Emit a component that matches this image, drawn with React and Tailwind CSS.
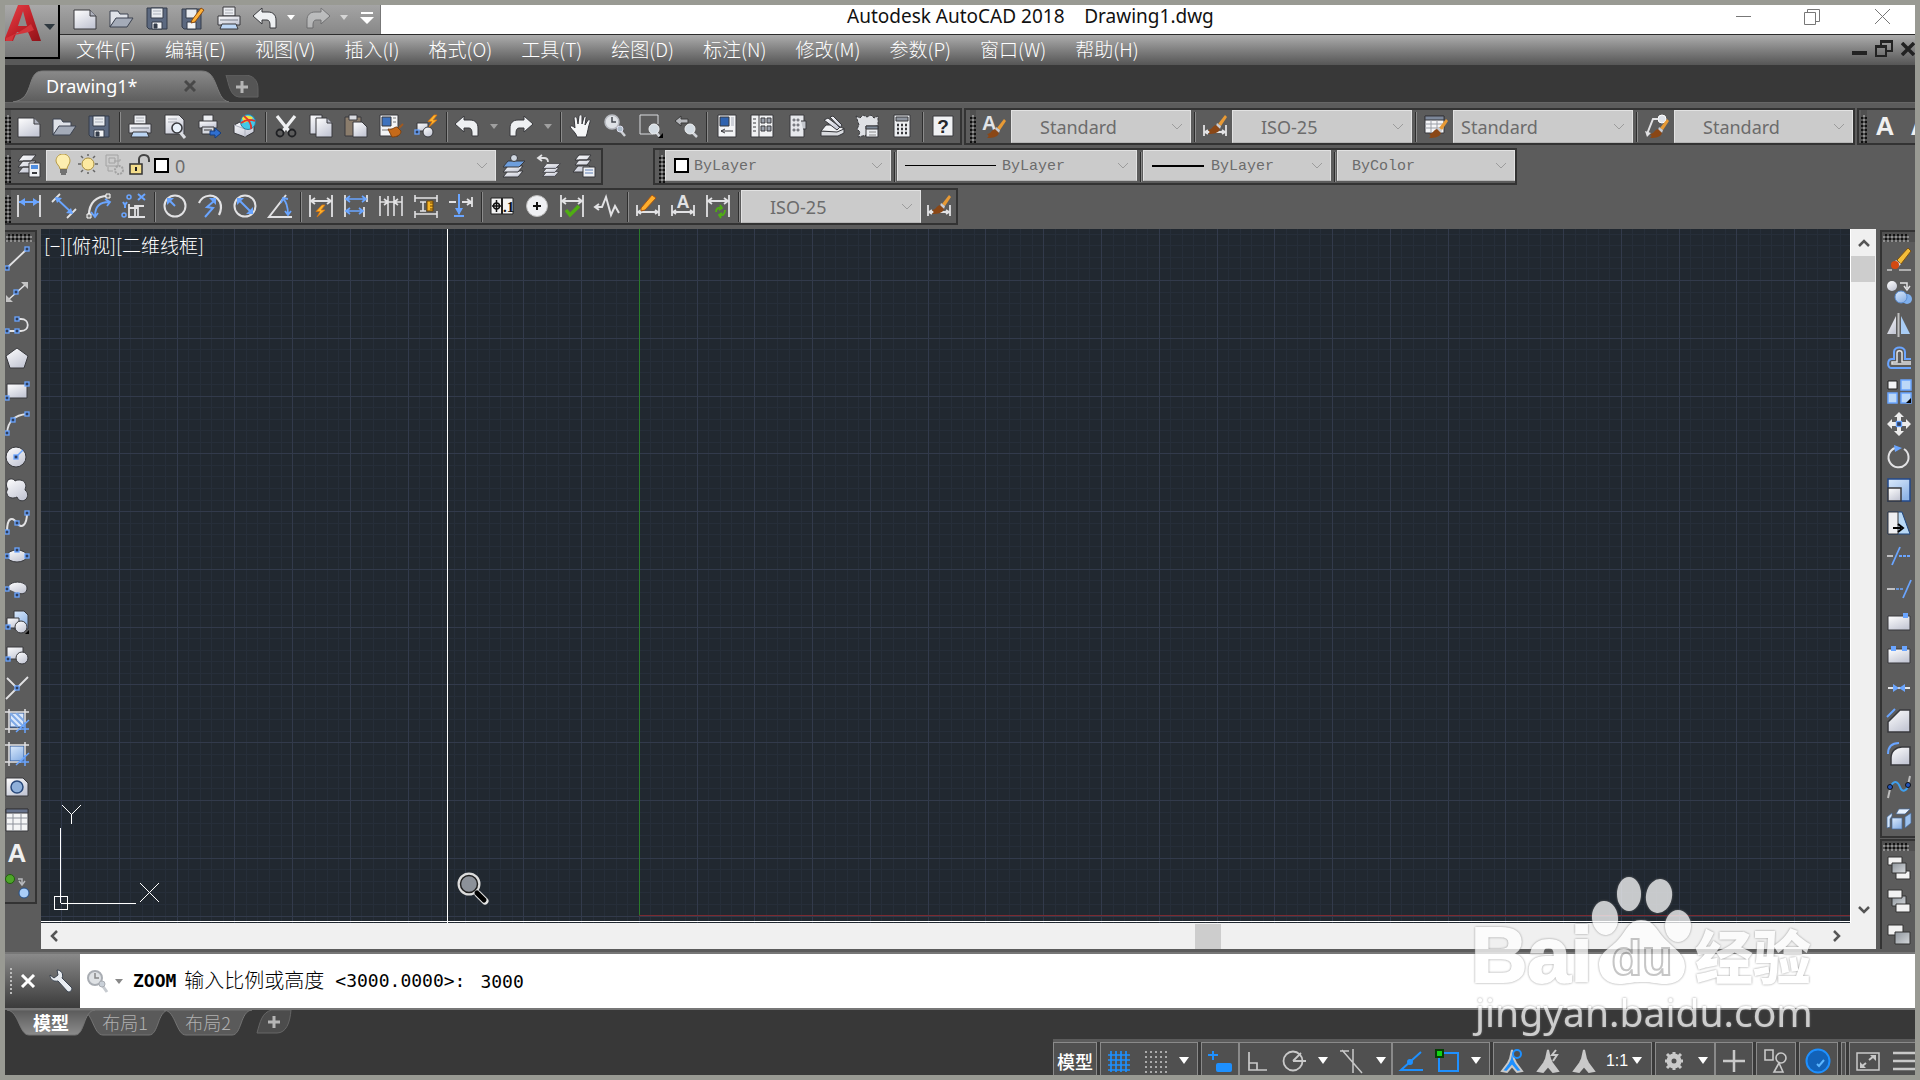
import React from "react";

const W = "#e2e2e4";
const B = "#6aa5ff";
const D = "#38393d";

const Defs = () => (
  <svg className="h-0 w-0 overflow-hidden fixed" aria-hidden="true">
    <defs>
      <linearGradient id="gl" x1="0" y1="0" x2="0.6" y2="1"><stop offset="0" stopColor="#ffffff" /><stop offset="1" stopColor="#c6c9d6" /></linearGradient>
      <linearGradient id="gb" x1="0" y1="0" x2="0.6" y2="1"><stop offset="0" stopColor="#dbeafc" /><stop offset="1" stopColor="#8fb4e6" /></linearGradient>
      <linearGradient id="gg" x1="0" y1="0" x2="1" y2="1"><stop offset="0" stopColor="#8e959c" /><stop offset="1" stopColor="#d5d8db" /></linearGradient>
      <linearGradient id="tab" x1="0" y1="0" x2="0" y2="1"><stop offset="0" stopColor="#8a8a8a" /><stop offset="1" stopColor="#5c5c5c" /></linearGradient>
      <linearGradient id="tabLow" x1="0" y1="0" x2="0" y2="1"><stop offset="0" stopColor="#5a5a5a" /><stop offset="1" stopColor="#8c8c8c" /></linearGradient>
      <linearGradient id="red" x1="0" y1="0" x2="1" y2="1"><stop offset="0" stopColor="#e8444a" /><stop offset="0.5" stopColor="#c3232b" /><stop offset="1" stopColor="#8e1219" /></linearGradient>
    </defs>
  </svg>
);

const Sq = ({ x, y, s = 4 }) => <rect x={x - s / 2} y={y - s / 2} width={s} height={s} fill="#2f3f5e" stroke={B} strokeWidth="1.3" />;
const Brush = () => (
  <g stroke="none">
    <path d="M22 5 L24 7 L18 16 L15 14z" fill="#e89a35" />
    <path d="M14 13l4 3-1 3-4-3z" fill="#c9ccd2" />
    <path d="M5 20c4 0 4-4 8-5l4 4c-1 4-6 5-12 5 2-1 2-3 0-4z" fill="#8a4716" />
  </g>
);
const Bars = ({ y = 16 }) => <path d={`M1 ${y - 4}v11M23 ${y - 4}v11M2 ${y + 3}h20M5 ${y + 1}l-3 2 3 2M19 ${y + 1}l3 2-3 2`} stroke={W} strokeWidth="1.8" />;
const Dim = ({ y = 7 }) => <path d={`M1 1v22M23 1v22M2 ${y}h20M6 ${y - 3}l-4 3 4 3M18 ${y - 3}l4 3-4 3`} stroke={W} strokeWidth="1.8" />;
const Bolt = ({ x = 0, y = 0 }) => <path transform={`translate(${x} ${y})`} d="M6 0L0 6.500h4L1 12l8-7H5l4-5z" fill="#ffb52e" stroke="#d9730c" strokeWidth="0.8" />;
const Stack = ({ blue }) => (
  <g stroke={D} strokeWidth="1">
    <path d="M6 17h15l-5 6H1z" fill="url(#gl)" />
    <path d="M6 12h15l-5 6H1z" fill="url(#gl)" />
    <path d="M6 7h17l-6 6H1z" fill={blue ? "#6d9edd" : "url(#gl)"} />
  </g>
);

const icons = {
  blank: <g fill="url(#gl)" stroke={D}><path d="M1 4h16l6 6v13H1z" /><path d="M17 4v6h6" fill="#aeb1bd" /></g>,
  open: <g stroke="#3c4350"><path d="M1 5h8l2 3h8v5H7l-6 8z" fill="#dfe2e8" /><path d="M7 12h17l-6 9H1z" fill="#a4abb8" /></g>,
  save: <g stroke="#343c4a"><path d="M2 2h20v21H4l-2-2z" fill="#5c6980" /><path d="M6 2h12v10H6z" fill="#e9ecf0" /><path d="M8 5h8M8 8h8" stroke="#a9afba" /><path d="M7 16h10v7H7z" fill="#f2f3f5" /><path d="M9 18h3v4H9z" fill="#343c4a" /></g>,
  saveas: <g stroke="#343c4a"><path d="M1 3h19v20H3l-2-2z" fill="#5c6980" /><path d="M5 3h11v9H5z" fill="#e9ecf0" /><path d="M6 16h9v7H6z" fill="#f2f3f5" /><path d="M11 14L20 2l3 2-9 12-4 1z" fill="#ffb238" stroke="#8b4c12" /></g>,
  print: <g stroke={D}><path d="M6 1h12v9H6z" fill="#eceef2" /><path d="M8 4h8M8 7h8" stroke="#a8abb2" /><path d="M1 10h22v9H1z" fill="url(#gl)" /><path d="M3 14h18" stroke="#777c87" /><path d="M5 18h14l2 5H3z" fill="#bcd6f5" /></g>,
  preview: <g stroke={D}><path d="M2 1h14l5 5v14H2z" fill="url(#gl)" /><path d="M5 5h9M5 8h9" stroke="#a9acb5" /><path d="M17 18l5 6" strokeWidth="3" stroke="#dcdee3" /><circle cx="14" cy="14" r="5" fill="#e9f1fa" strokeWidth="1.6" /></g>,
  plot: <g stroke={D}><path d="M5 1h10v7H5z" fill="#eceef2" /><path d="M1 7h18v7H1z" fill="url(#gl)" /><path d="M4 13h12v7H4z" fill="#d6d9df" /><path d="M6 16h8" /><path d="M12 17h5v-3l6 5-6 5v-3h-5z" fill="#2f6fd0" stroke="#173d7c" /></g>,
  globe: <g stroke={D}><path d="M1 11l8-4 12 5v6l-9 5-11-4z" fill="url(#gl)" /><path d="M12 23v-8L1 11" stroke="#aeb1bd" /><circle cx="15" cy="8" r="7.500" fill="#45c8e8" stroke="#2d7c9f" /><path d="M9 4c3-3 8-3 11 0l-4 3-5 2z" fill="#f1e040" stroke="none" /><path d="M11 2c5 4 8 8 7 13M8 9c4-3 9-4 14-2" stroke="#e0362c" strokeWidth="1.8" /></g>,
  cut: <g><path d="M3 2l12 15M21 2L9 17" stroke="#f0f1f3" strokeWidth="3.200" /><circle cx="6" cy="19" r="3.500" stroke="#1f2023" strokeWidth="1.800" /><circle cx="18" cy="19" r="3.500" stroke="#1f2023" strokeWidth="1.800" /></g>,
  copy: <g fill="url(#gl)" stroke={D}><path d="M1 1h12v19H1z" /><path d="M7 4h11l5 5v14H7z" /><path d="M18 4v5h5" fill="#b7bac6" /></g>,
  paste: <g stroke={D}><path d="M1 3h16v19H1z" fill="#8b7d6c" /><path d="M5 1h8v5H5z" fill="#d9dbe0" /><path d="M9 8h9l5 5v10H9z" fill="url(#gl)" /></g>,
  match: <g stroke={D}><path d="M1 1h18v21H1z" fill="#f3f4f6" /><path d="M3 3h9v9H3z" fill="#3e72bd" /><path d="M14 4h3M14 8h3M3 16h7" stroke="#777" /><path d="M9 15c5 1 6-2 9-2l4 4c0 4-4 6-9 6z" fill="#c56a1a" stroke="#7f420f" /><path d="M20 14l4-4" stroke="#a05a20" strokeWidth="2" /></g>,
  blockedit: <g><path d="M3 9h11v8H3z" fill="url(#gl)" stroke={D} /><circle cx="14" cy="18" r="5" fill="url(#gl)" stroke={D} /><Sq x={3} y={18} /><Bolt x={14} y={1} /></g>,
  undo: <path d="M0 10L9 2v4h6c5 0 8 3 8 8v8h-6v-3c0-3-1-5-3-5H9v4z" fill="#eef0f2" stroke={D} />,
  redo: <path d="M24 10L15 2v4H9c-5 0-8 3-8 8v8h6v-3c0-3 1-5 3-5h5v4z" fill="#eef0f2" stroke={D} />,
  hand: <path d="M8 23c-1-4-4-6-7-10 1-2 3-1 5 1L5 4c1-2 2-1 3 0l1 6 1-8c1-2 3-1 3 0v8l2-7c1-1 3-1 2 1l-1 7 3-5c1-1 3 0 2 2-2 5-2 10-4 15z" fill="#f5f6f7" stroke={D} />,
  zoomrt: <g><circle cx="8" cy="8" r="7" fill="#dfe2e6" stroke="#b7bac0" strokeWidth="1.500" /><path d="M8 3v5h4" stroke="#44484f" strokeWidth="1.500" /><path d="M16 16l5 6" stroke="#cfd2d7" strokeWidth="2.500" /><circle cx="16" cy="15" r="3" fill="#aebdca" stroke="#dde" /></g>,
  zoomwin: <g><path d="M14 20H1V1h18v9" stroke="#d9dbde" /><path d="M17 18l4 5" stroke="#cfd2d7" strokeWidth="2.500" /><circle cx="15" cy="15" r="5" fill="#d3dbe2" stroke="#f0f2f4" /><path d="M24 19v5h-5z" fill="#000" /></g>,
  zoomprev: <g><path d="M1 7l6-5v3h7v4H7v3z" fill="#b6b8bc" stroke="#3a3a3a" /><path d="M18 18l5 5" stroke="#cfd2d7" strokeWidth="2.500" /><circle cx="16" cy="15" r="5" fill="#d3dbe2" stroke="#f0f2f4" /></g>,
  props: <g stroke={D}><path d="M3 1h18v22H3z" fill="#f3f4f6" /><path d="M5 3h9v9H5z" fill="#2f62ae" /><path d="M16 3h3v9h-3z" fill="#cdd0d7" stroke="none" /><path d="M6 17h12M6 17l4-2M6 17l4 2" /></g>,
  design: <g stroke={D}><path d="M1 1h22v22H1z" fill="#f0f1f3" /><path d="M9 1v22" /><path d="M3 5h3M3 9h3M3 13h3M3 17h3" /><path d="M11 4h4v5h-4zM17 4h4v5h-4zM11 12h4v5h-4zM17 12h4v5h-4z" fill="#9aa0ab" /></g>,
  palettes: <g stroke={D}><path d="M5 1h14v22H5z" fill="#e6e8ec" /><path d="M8 5h2v2H8zM12 5h2v2h-2zM8 10h2v2H8zM12 10h2v2h-2zM8 15h2v2H8zM12 15h2v2h-2z" fill="#a9aeb8" strokeWidth="0.500" /><path d="M16 7h5v8h-3" fill="#c4c7cd" /></g>,
  sheet: <g stroke={D}><path d="M1 17h16l7-3v5l-6 3H1z" fill="#d8dade" /><path d="M1 17L6 11l12 0 6 4-7 3z" fill="#f1f2f4" /><path d="M4 6l4-2 12 9-3 3zM10 3l3-1 9 9-2 3z" fill="url(#gl)" /></g>,
  markup: <g stroke={D}><path d="M1 2l4 2 3-3 4 2 4-2 3 3 4-2v10l-8 1-3 8-9 2 2-5-3-3 2-4z" fill="#dfe1e5" strokeDasharray="3 1" /><path d="M11 12h12v11H11z" fill="#eceef1" /><path d="M11 12h12v3H11z" fill="#7d8896" /><path d="M14 18h7M14 21h7" stroke="#888" /></g>,
  calc: <g stroke={D}><path d="M4 1h16v22H4z" fill="#eceef1" /><path d="M6 3h12v4H6z" fill="#8e949e" /><path d="M7 11h2M11 11h2M15 11h2M7 15h2M11 15h2M15 15h2M7 19h2M11 19h2M15 19h2" strokeWidth="2.500" /></g>,
  help: <g><path d="M2 2h20v20H2z" fill="#f0f1f3" stroke={D} /><text x="12" y="19" textAnchor="middle" fontFamily="Liberation Sans" fontWeight="bold" fontSize="19" fill="#24262a">?</text></g>,
  textstyle: <g><text x="0" y="16" fontFamily="Liberation Sans" fontWeight="bold" fontSize="20" fill="#e2e4e8">A</text><Brush /></g>,
  dimstyle: <g><Bars y={15} /><g transform="translate(0 -4)"><Brush /></g></g>,
  tablestyle: <g><path d="M1 2h19v17H1z" fill="#f5f6f8" stroke={D} /><path d="M1 2h19v4H1z" fill="#7c879a" stroke={D} /><path d="M1 10h19M1 14h19M7 6v13M13 6v13" stroke="#9a9ea6" /><Brush /></g>,
  leaderstyle: <g><circle cx="17" cy="5" r="4" fill="#dfe3ea" stroke="#fff" /><path d="M13 5H8L2 20" stroke={W} strokeWidth="2" /><path d="M0 17l2 6 4-4z" fill={W} /><Brush /></g>,
  bigA: <text x="12" y="21" textAnchor="middle" fontFamily="Liberation Sans" fontWeight="bold" fontSize="26" fill="#f0f0f0">A</text>,
  layers: <g><path d="M6 1h13l-5 6H1zM6 7h13l-5 6H1zM6 13h13l-5 6H1z" fill="url(#gl)" stroke={D} /><path d="M12 9h11v14H12z" fill="#eceef2" stroke={D} /><path d="M14 11h7v4h-7z" fill="#4f8ee0" /><path d="M15 19h5" stroke={D} strokeWidth="2" /></g>,
  layercur: <g><Stack blue /><circle cx="12" cy="4" r="3.500" fill="#cfd6e0" stroke={D} /></g>,
  layerprev: <g><g transform="translate(5 4) scale(.8)"><Stack /></g><path d="M1 4h6c3 0 4 2 4 4M5 1L1 4l4 3" stroke={W} strokeWidth="1.800" /></g>,
  layerstate: <g><path d="M7 1h12l-4 5H3zM7 6h12l-4 5H3zM6 12h12l-4 6H1z" fill="url(#gl)" stroke={D} /><path d="M11 13h12v10H11z" fill="#eef0f3" stroke={D} /><path d="M13 16h8M13 19h8" stroke="#5e7fb5" /></g>,
  linear: <g><path d="M1 1v22M23 1v22" stroke={W} strokeWidth="1.800" /><path d="M2 8h20" stroke={B} strokeWidth="2" /><path d="M8 4v8L2 8zM16 4v8l6-4z" fill={B} /></g>,
  aligned: <g><path d="M0 8l8-8M15 24l9-9" stroke={W} strokeWidth="1.800" /><path d="M4 4l16 15" stroke={B} strokeWidth="1.800" /><path d="M3 3l7 1-5 5zM21 20l-7-1 5-5z" fill={B} /></g>,
  arclen: <g><path d="M2 21C2 9 9 2 21 2" stroke={W} strokeWidth="2.200" /><path d="M8 22C8 13 13 8 22 8M4 18l4 5 3-4M18 5l5 3-3 4" stroke={B} strokeWidth="1.800" /><path d="M0 20h4v4H0zM19 0h4v4h-4z" fill="#777" stroke="#fff" /></g>,
  ordinate: <g><path d="M7 10v13h16M13 23V12l9 0M7 14h9v9" stroke={W} strokeWidth="1.800" /><path d="M16 0l7 6M23 0l-7 6M1 8l2 3 2-3M3 11v3" stroke={B} strokeWidth="2" /><circle cx="7" cy="3" r="2" stroke={B} strokeWidth="1.500" /><circle cx="2" cy="21" r="2" stroke={B} strokeWidth="1.500" /></g>,
  radius: <g><circle cx="12" cy="12" r="10.500" stroke={W} strokeWidth="2" /><path d="M12 12L6 6" stroke={B} strokeWidth="2" /><path d="M4 4h7l-7 7z" fill={B} /></g>,
  jogged: <g><path d="M1 9C5 0 17-1 22 8c2 5 1 9-1 13" stroke={W} strokeWidth="2.200" /><path d="M16 7l-7 6 6 1-8 9" stroke={B} strokeWidth="2" /><path d="M11 4h7v7z" fill={B} /></g>,
  diameter: <g><circle cx="12" cy="12" r="10.500" stroke={W} strokeWidth="2" /><path d="M6 6l12 12" stroke={B} strokeWidth="2" /><path d="M4 4h7l-7 7zM20 20h-7l7-7z" fill={B} /></g>,
  angular: <g><path d="M18 1L1 23h23" stroke={W} strokeWidth="2" /><path d="M15 5c4 3 5 9 5 16M13 9l2-5 5 1M17 17l3 4 3-4" stroke={B} strokeWidth="1.800" /></g>,
  quickdim: <g><Dim y={7} /><Bolt x={7} y={11} /></g>,
  baseline: <g><path d="M1 1v22M23 1v7M20 13v10" stroke={W} strokeWidth="1.800" /><path d="M2 5h20M6 2L2 5l4 3M18 2l4 3-4 3M2 17h17M6 14l-4 3 4 3M15 14l4 3-4 3" stroke={B} strokeWidth="1.700" /></g>,
  cont: <path d="M1 2v20M9 2v20M15 2v20M23 2v20M1 8h22M5 5l4 3-4 3M19 5l-4 3 4 3" stroke={W} strokeWidth="1.600" />,
  space: <g><path d="M1 1v7M23 1v7M1 17v7M23 17v7M1 4h22M1 20h22M9 8v9M6 8h6M6 17h6" stroke={W} strokeWidth="1.600" /><path d="M13 7h6v10h-6z" fill="#f6b424" stroke="#6d4507" /><path d="M16 9h3M16 12h3M16 15h3" stroke="#6d4507" /></g>,
  brk: <g><path d="M0 8h7M13 8h9M18 5l4 3-4 3M23 3v10" stroke={W} strokeWidth="1.800" /><path d="M10 0v20M5 22h10" stroke={B} strokeWidth="2" /><path d="M6 14h8l-4 7z" fill={B} /></g>,
  tol: <g><path d="M1 4h22v16H1z" fill="#f4f4f4" stroke="#222" /><path d="M12 4v16" stroke="#222" strokeWidth="2" /><circle cx="6.500" cy="12" r="3" stroke="#111" strokeWidth="1.500" /><path d="M6.500 6v12M2 12h9" stroke="#111" strokeWidth="1.500" /><text x="13" y="18" fontFamily="Liberation Serif" fontWeight="bold" fontSize="15" fill="#111">.1</text></g>,
  center: <g><circle cx="12" cy="12" r="10.500" fill="#eff0f3" stroke="#bbb" /><path d="M12 8v8M8 12h8" stroke="#111" strokeWidth="2" /></g>,
  inspect: <g><Dim y={7} /><path d="M6 16l4 5 9-9" stroke="#4fae12" strokeWidth="3.500" /></g>,
  jogline: <path d="M0 13l7 0 4-10 5 18 4-9 4 7M4 10l-4 3 4 3" stroke={W} strokeWidth="2" />,
  dimedit: <g><Bars y={15} /><path d="M5 14L16 1l4 3L9 16l-4 1z" fill="#ffae2c" stroke="#a65512" /></g>,
  dimtedit: <g><Bars y={15} /><text x="12" y="14" textAnchor="middle" fontFamily="Liberation Sans" fontWeight="bold" fontSize="18" fill={W}>A</text></g>,
  dimupd: <g><Dim y={7} /><path d="M10 18c0-4 3-5 5-4M14 11l2 3-3 2M19 16c0 5-3 6-5 5M15 24l-2-3 3-2" stroke="#4fae12" strokeWidth="1.800" /></g>,
  line: <g><path d="M2 21L22 2" stroke={W} strokeWidth="1.800" /><Sq x={2} y={21} /><Sq x={22} y={2} /></g>,
  xline: <g><path d="M3 20L21 4" stroke={W} strokeWidth="1.500" /><path d="M16 2h7v7zM1 15v7h7z" fill="#c4c4c4" /><Sq x={11} y={12} /></g>,
  pline: <g><path d="M2 18h14c9 0 9-12 0-12h-3" stroke={W} strokeWidth="1.800" /><Sq x={2} y={18} /><Sq x={12} y={18} /><Sq x={12} y={6} /></g>,
  polygon: <path d="M12 2l11 8-4 12H5L1 10z" fill="url(#gl)" stroke={D} />,
  rect: <g><path d="M2 5h20v14H2z" fill="url(#gl)" stroke={D} /><Sq x={2} y={19} /><Sq x={22} y={5} /></g>,
  arc: <g><path d="M2 21C3 9 9 3 22 2" stroke={W} strokeWidth="1.800" /><Sq x={2} y={21} /><Sq x={8} y={8} /><Sq x={22} y={2} /></g>,
  circle: <g><circle cx="11" cy="12" r="10" fill="url(#gl)" stroke={D} /><path d="M11 12l7-7" stroke={B} strokeWidth="1.500" /><Sq x={11} y={12} /></g>,
  cloud: <path d="M3 2c3-2 6-1 7 1 3-2 9-1 10 2 2 3 0 5 0 7 4 3 3 8 0 10-4 2-7 0-8-3-4 2-9 1-10-3-1-2 0-4 1-5-2-2-2-6 0-9z" fill="url(#gl)" stroke={D} />,
  spline: <g><path d="M2 21C2 5 8 6 12 12c4 6 10 3 10-10" stroke={W} strokeWidth="2" /><Sq x={2} y={21} /><Sq x={12} y={12} /><Sq x={22} y={2} /></g>,
  ellipse: <g><ellipse cx="12" cy="12" rx="10" ry="6" fill="url(#gl)" stroke={D} /><Sq x={2} y={12} /><Sq x={12} y={6} /><Sq x={22} y={12} /></g>,
  ellarc: <g><path d="M3 12C2 3 22 3 22 11c0 5-4 7-10 5" fill="url(#gl)" stroke={D} /><Sq x={2} y={12} /><Sq x={12} y={18} /></g>,
  insert: <g><path d="M9 1h10l4 4v14H9z" fill="url(#gb)" stroke={D} /><path d="M2 8h12v10H2z" fill="url(#gl)" stroke={D} /><circle cx="16" cy="17" r="6" fill="url(#gl)" stroke={D} /><Sq x={3} y={17} /><path d="M24 20v4h-4z" fill="#000" /></g>,
  mkblock: <g><path d="M2 4h16v12H2z" fill="url(#gl)" stroke={D} /><circle cx="17" cy="15" r="6" fill="url(#gl)" stroke={D} /><Sq x={3} y={16} /></g>,
  point: <g><path d="M2 2l10 10M23 1L1 23" stroke={W} strokeWidth="1.800" /><Sq x={12} y={12} /></g>,
  hatch: <g><path d="M5 4h14v14H5z" fill="#dbe8fb" stroke="#2c5697" /><path d="M5 10l8 8M5 4l14 14M11 4l8 8" stroke="#7ea9e6" strokeWidth="2" /><path d="M0 3h24M0 20h16M4 0v24M20 0v14" stroke={W} strokeWidth="1.500" /><path d="M11 23L24 11M20 13v11M15 20h9" stroke={B} strokeWidth="1.500" /></g>,
  gradient: <g><path d="M5 4h14v15H5z" fill="url(#gb)" stroke="#2c5697" /><path d="M0 3h24M0 20h16M4 0v24M20 0v14" stroke={W} strokeWidth="1.500" /><path d="M11 23L24 11M20 13v11M15 20h9" stroke={B} strokeWidth="1.500" /></g>,
  region: <g><path d="M1 3h17l5 5v13H1z" fill="url(#gl)" stroke={D} /><circle cx="12" cy="12" r="6" fill="#8fb0da" stroke="#2a4a7c" strokeWidth="1.500" /></g>,
  table: <g><path d="M1 1h22v22H1z" fill="#f4f5f6" stroke={D} /><path d="M1 1h22v4H1z" fill="#66728c" stroke={D} /><path d="M1 10h22M1 16h22M8 5v18M16 5v18" stroke="#8d919a" /></g>,
  addsel: <g><circle cx="5" cy="5" r="4.500" fill="#4ea52a" stroke="#22610d" /><path d="M13 5h4v5M14 7l3 4 3-4" stroke="#b6b8bc" strokeWidth="1.500" /><circle cx="19" cy="19" r="5" fill="#a9cdf7" stroke="#24508a" /></g>,
  erase: <g><path d="M10 13L21 1l3 3-10 13z" fill="#f3bd3a" stroke="#7c5210" /><path d="M9 13l5 4-3 3-4-4z" fill="#d8dce0" /><ellipse cx="8" cy="18" rx="4" ry="4" fill="#d24a12" /><path d="M0 23h5M12 23h12" stroke="#c9c9c9" strokeWidth="1.500" /></g>,
  copyobj: <g><circle cx="5" cy="6" r="5" fill="url(#gl)" /><circle cx="20" cy="19" r="5" fill="#7fb0ee" /><circle cx="14" cy="17" r="6" fill="url(#gb)" stroke="#5b8fd6" /><path d="M13 3h7v5M17 6l3 4 3-4" stroke={W} strokeWidth="1.500" /></g>,
  mirror: <g><path d="M9 3v18H0z" fill="url(#gl)" /><path d="M14 3v18h9z" fill="#a9cdf5" /><path d="M11.500 0v24" stroke="#bfbfbf" strokeWidth="2" /></g>,
  offset: <g><path d="M24 22H4c-4 0-4-9 1-9h2V6c0-6 11-6 11 0v7h6" stroke={B} strokeWidth="2" /><path d="M24 18H5v-2h5V7c0-3 5-3 5 0v9h9" stroke={W} strokeWidth="1.500" /></g>,
  array: <g><path d="M1 2h9v8H1z" fill="#f3f4f6" stroke="#222" /><path d="M14 1h10v10H14zM1 14h9v10H1zM14 14h10v10H14z" fill="#bcd8f8" stroke={B} strokeWidth="1.500" /><path d="M24 19v5h-5z" fill="#000" /></g>,
  move: <g><path d="M12 0l5 5h-3v4h-4V5H7zM12 24l-5-5h3v-4h4v4h3zM0 12l5-5v3h4v4H5v3zM24 12l-5 5v-3h-4v-4h4V7z" fill="#ececec" /><Sq x={12} y={12} s={5} /></g>,
  rotate: <g><path d="M17 4a10 10 0 1 1-9-1" stroke={W} strokeWidth="2" /><path d="M7 0l8 3-7 4z" fill={B} /></g>,
  scale: <g><path d="M1 1h22v22H1z" fill="url(#gb)" stroke="#22488a" strokeWidth="1.500" /><path d="M1 10h13v13H1z" fill="url(#gl)" stroke={D} strokeWidth="1.500" /></g>,
  stretch: <g><path d="M1 1h14l8 22H1z" fill="#b8d8f5" stroke="#1f477f" /><path d="M1 1h10v22H1z" fill="#eeeff2" stroke={D} /><path d="M6 17h8M11 13l5 4-5 4" stroke="#000" strokeWidth="2" /></g>,
  trim: <g><path d="M0 12h6" stroke={W} strokeWidth="1.500" /><path d="M5 21L13 3" stroke={B} strokeWidth="1.800" /><path d="M12 12h12" stroke={B} strokeWidth="1.800" strokeDasharray="3 1" /></g>,
  extend: <g><path d="M0 12h8" stroke={W} strokeWidth="1.500" /><path d="M9 12h8" stroke={B} strokeWidth="1.500" strokeDasharray="3 1" /><path d="M16 21L24 3" stroke={B} strokeWidth="1.800" /></g>,
  breakpt: <g><path d="M1 6h22v14H1z" fill="url(#gl)" stroke={D} /><path d="M16 3h5v5h-5z" fill={B} /></g>,
  breakobj: <g><path d="M1 6h22v14H1z" fill="url(#gl)" stroke={D} /><path d="M4 3h5v5H4zM15 3h5v5h-5z" fill={B} /></g>,
  join: <g><path d="M1 12h22" stroke={W} strokeWidth="2" /><path d="M6 8l6 4-6 4zM18 8l-6 4 6 4z" fill={B} /></g>,
  chamfer: <g><path d="M1 13L13 1h10v22H1z" fill="url(#gl)" stroke={D} strokeWidth="1.500" /><path d="M0 8l8-8" stroke={B} strokeWidth="2" /></g>,
  fillet: <g><path d="M4 23V16C4 9 9 5 15 5h8v18z" fill="url(#gl)" stroke={D} strokeWidth="1.500" /><path d="M1 12C1 5 5 1 12 1" stroke={B} strokeWidth="2" /></g>,
  blend: <g><path d="M1 23l2-9M23 1l-2 9" stroke="#bdbdbd" strokeWidth="2" /><path d="M3 12c5-8 8-5 10 0 2 6 7 4 8-2" stroke="#3fa0ef" strokeWidth="2" /><circle cx="3" cy="12" r="2.500" fill="#2354b8" stroke="#111" /><circle cx="21" cy="10" r="2.500" fill="#2354b8" stroke="#111" /></g>,
  explode: <g stroke="#456a9c" strokeWidth="0.700"><path d="M9 6l3-5h11l-5 5z" fill="#e8f2fd" /><path d="M5 10h10v11H5z" fill="url(#gb)" /><path d="M18 9l6-4v10l-6 5z" fill="#9dc2ee" /><path d="M0 9l5-4v3l-2 3v8l-3 1z" fill="#d3e5fa" /></g>,
  front: <g stroke="#333"><path d="M1 1h14v8H1z" fill="#f2f2f2" /><path d="M9 15h14v8H9z" fill="#f2f2f2" /><path d="M5 7h14v10H5z" fill="url(#gg)" /></g>,
  back: <g stroke="#333"><path d="M5 7h14v10H5z" fill="url(#gg)" /><path d="M1 1h14v8H1z" fill="#f2f2f2" /><path d="M9 15h14v8H9z" fill="#f2f2f2" /></g>,
  above: <g stroke="#333"><path d="M1 3h15v10H1z" fill="#f2f2f2" /><path d="M8 10h15v12H8z" fill="url(#gg)" /></g>,
};

const Icon = ({ name }) => (
  <svg width="24" height="24" viewBox="0 0 24 24" fill="none" className="shrink-0 overflow-visible" aria-hidden="true">{icons[name]}</svg>
);

const Tool = ({ name }) => (
  <button type="button" aria-label={name} className="flex h-full w-[35px] shrink-0 items-center justify-center pb-[2px]"><Icon name={name} /></button>
);
const Sep = () => <div className="flex h-full w-[6px] shrink-0 items-center"><div className="ml-[3px] h-[30px] w-[2px] border-l border-l-[#2e2e2e] border-r border-r-[#8b8b8b]" /></div>;
const Grip = () => <div className="h-full w-[6px] shrink-0 bg-[#505050] pt-[5px]"><div className="h-full bg-[conic-gradient(#8f8f8f_0_25%,#505050_0_50%,#111_0_75%,#505050_0)] bg-[length:4px_4px]" /></div>;
const HGrip = () => <div className="h-[10px] shrink-0 bg-[#505050] pt-[2px]"><div className="ml-[1px] h-[8px] w-[26px] bg-[conic-gradient(#111_0_25%,#505050_0_50%,#8f8f8f_0_75%,#505050_0)] bg-[length:4px_4px]" /></div>;
const Tri = ({ color = "#a0a0a0" }) => <svg width="8" height="5" viewBox="0 0 8 5" aria-hidden="true"><path d="M0 0h8L4 5z" fill={color} /></svg>;
const Chevron = () => (
  <svg width="12" height="8" viewBox="0 0 12 8" fill="none" className="mr-[7px] shrink-0" aria-hidden="true"><path d="M1 1l5 5 5-5" stroke="#9c9c9c" /></svg>
);

const Combo = ({ label, value, width, pad = "pl-[28px]", low, mono, children }) => (
  <label className={`flex shrink-0 items-center border border-[#e2e2e2] border-b-[#b5b5b5] bg-[#cbcbcb] ${width} ${pad} ${low ? "h-[31px]" : "h-[33px]"}`}>
    {children}
    <select aria-label={label} defaultValue={value} className={mono ? "min-w-0 flex-1 appearance-none bg-transparent pt-[3px] font-['Liberation_Mono',monospace] text-[15px] leading-5 text-[#6c6c6c]" : "min-w-0 flex-1 appearance-none bg-transparent font-['Noto_Sans',sans-serif] text-[18px] leading-6 text-[#6c6c6c]"}>
      <option>{value}</option>
    </select>
    <Chevron />
  </label>
);

const Bar = ({ children, open }) => (
  <div className={`flex h-[37px] shrink-0 border-y-2 border-[#333] bg-[#5c5c5c] ${open ? "" : "border-r-2"}`}>{children}</div>
);
const tools = (list) => list.split(" ").map((n, i) => (n === "|" ? <Sep key={i} /> : n === "v" ? <span key={i} className="flex w-[19px] items-center justify-center"><Tri /></span> : <Tool key={i} name={n} />));

const menus = ["文件(F)", "编辑(E)", "视图(V)", "插入(I)", "格式(O)", "工具(T)", "绘图(D)", "标注(N)", "修改(M)", "参数(P)", "窗口(W)", "帮助(H)"];

const Header = () => (
  <header className="flex h-[60px] shrink-0">
    <div className="w-[55px] shrink-0 bg-[#595959]">
      <button type="button" aria-label="Application menu" className="flex h-[54px] w-full items-start border-b-2 border-r-2 border-black bg-linear-to-b from-[#a9a9a9] to-[#777]">
        <svg width="52" height="42" viewBox="0 0 52 42" aria-hidden="true">
          <path d="M13 0h11l12 36h-9l-4-9H12L8 36H0v-3z" fill="url(#red)" />
          <path d="M18 6l4 15h-9z" fill="#8c8c8c" />
          <path d="M1 33c10-4 19-9 25-14l3 6c-7 3-14 4-20 5l-2 6H1z" fill="#d2353b" />
          <path d="M39 19h11l-5 6z" fill="#2f3940" />
        </svg>
      </button>
    </div>
    <div className="flex min-w-0 flex-1 flex-col">
      <div className="flex h-[30px] border-b border-[#2c2c2c] bg-white">
        <div className="flex w-[321px] shrink-0 items-center border-r border-[#777] bg-linear-to-b from-[#a4a4a4] to-[#888] pb-[4px] pl-[7px]">
          {["blank", "open", "save", "saveas", "print", "undo"].map((n) => <button key={n} type="button" aria-label={`quick ${n}`} className="flex h-6 w-9 shrink-0 items-center justify-center"><Icon name={n} /></button>)}
          <span className="flex w-[16px] justify-center"><Tri color="#fff" /></span>
          <button type="button" aria-label="quick redo" className="flex h-6 w-[38px] items-center justify-center opacity-40"><Icon name="redo" /></button>
          <span className="flex w-[14px] justify-center"><Tri color="#d5d5d5" /></span>
          <button type="button" aria-label="Customize" className="ml-[9px]"><svg width="14" height="12" viewBox="0 0 14 12"><path d="M1 0h12v2H1zM0 5h14l-7 7z" fill="#fff" /></svg></button>
        </div>
        <h1 className="flex-1 whitespace-pre pl-[466px] font-['Noto_Sans',sans-serif] text-[19px] leading-[22px] text-[#111]">Autodesk AutoCAD 2018    Drawing1.dwg</h1>
        <div className="flex items-start pt-[4px] text-[#777]">
          <button type="button" aria-label="Minimize" className="w-[67px] pl-[26px]"><svg width="16" height="16" viewBox="0 0 16 16"><path d="M0 7.500h15" stroke="currentColor" /></svg></button>
          <button type="button" aria-label="Restore" className="w-[71px] pl-[27px]"><svg width="16" height="16" viewBox="0 0 16 16" fill="none" stroke="currentColor"><path d="M.5 3.500h11v12H.5zM3.500 3.500v-3h12v12h-4" /></svg></button>
          <button type="button" aria-label="Close" className="w-[67px] pl-[27px]"><svg width="16" height="16" viewBox="0 0 16 16"><path d="M0 0l15 15M15 0L0 15" stroke="currentColor" /></svg></button>
        </div>
      </div>
      <nav className="flex h-[30px] items-center bg-linear-to-b from-[#adadad] to-[#565656] pb-[3px] pl-[16px]">
        <div className="flex flex-1 gap-[29px]">
          {menus.map((m) => <a key={m} href="#" className="whitespace-nowrap font-['Noto_Sans_CJK_SC',sans-serif] text-[19px] leading-[26px] font-light text-white">{m}</a>)}
        </div>
        <div className="flex items-center gap-[8px] text-[#222]">
          <button type="button" aria-label="Minimize drawing"><svg width="15" height="16" viewBox="0 0 15 16"><path d="M0 10h15v4H0z" fill="currentColor" /></svg></button>
          <button type="button" aria-label="Restore drawing"><svg width="18" height="17" viewBox="0 0 18 17" fill="none" stroke="currentColor" strokeWidth="2"><path d="M1 6h10v10H1zM6 5V1h11v10h-5" /><path d="M1 7h10M6 2h11" /></svg></button>
          <button type="button" aria-label="Close drawing"><svg width="14" height="14" viewBox="0 0 14 14"><path d="M1 1l12 12M13 1L1 13" stroke="currentColor" strokeWidth="3.500" /></svg></button>
        </div>
      </nav>
    </div>
  </header>
);

const DocTabs = () => (
  <div className="flex h-[37px] shrink-0 bg-[#383838] pl-[8px]">
    <div className="grid">
      <svg width="216" height="32" viewBox="0 0 216 32" className="col-start-1 row-start-1 self-end" aria-hidden="true">
        <path d="M0 32c12-2 14-8 18-20 3-9 6-11 13-11H188c8 0 11 4 14 11 5 12 6 18 14 20z" fill="url(#tab)" stroke="#7b7b7b" />
      </svg>
      <div className="col-start-1 row-start-1 flex items-center pl-[33px] pt-[5px]">
        <button type="button" className="w-[138px] text-left font-['Noto_Sans',sans-serif] text-[18px] leading-6 text-white">Drawing1*</button>
        <button type="button" aria-label="Close Drawing1"><svg width="12" height="12" viewBox="0 0 12 12"><path d="M1 1l10 10M11 1L1 11" stroke="#484848" strokeWidth="3" /></svg></button>
      </div>
    </div>
    <button type="button" aria-label="New drawing tab" className="mt-[10px] -ml-[4px] h-[23px]">
      <svg width="34" height="23" viewBox="0 0 34 23"><path d="M1 0h18c9 0 14 5 14 14v8H14C5 21 4 10 1 0z" fill="#555" stroke="#626262" /><path d="M11 12h12M17 6v12" stroke="#b5b5b5" strokeWidth="3" /></svg>
    </button>
  </div>
);

const Swatch = ({ s }) => <span className={`shrink-0 border-2 border-black bg-white ${s}`} />;

const Toolbars = () => (
  <div className="flex shrink-0 flex-col gap-[3px] border-t border-t-[#666] bg-[#5c5c5c] pt-[5px] pb-[4px]">
    <div className="flex gap-[2px] overflow-hidden">
      <Bar>
        <Grip />
        {tools("blank open save | print preview plot globe | cut copy paste match blockedit | undo v redo v | hand zoomrt zoomwin zoomprev | props design palettes sheet markup calc | help")}
      </Bar>
      <Bar>
        <div className="w-[6px] shrink-0 border-l-2 border-[#333]" />
        <Grip /><Tool name="textstyle" />
        <Combo label="Text style" value="Standard" width="w-[180px]" /><Sep />
        <Tool name="dimstyle" /><Combo label="Dimension style" value="ISO-25" width="w-[180px]" /><Sep />
        <Tool name="tablestyle" /><Combo label="Table style" value="Standard" width="w-[180px]" pad="pl-[7px]" /><Sep />
        <Tool name="leaderstyle" /><Combo label="Multileader style" value="Standard" width="w-[179px]" />
      </Bar>
      <Bar open>
        <div className="w-[4px] shrink-0 border-l-2 border-[#333]" />
        <Grip /><Tool name="bigA" /><Tool name="bigA" />
      </Bar>
    </div>
    <div className="flex gap-[50px]">
      <Bar>
        <Grip /><Tool name="layers" />
        <Combo label="Layer" value="0" width="w-[450px]" pad="pl-[8px]" low>
          <svg width="96" height="24" viewBox="0 0 96 24" fill="none" className="shrink-0" aria-hidden="true">
            <path d="M8 0c5 0 7 4 7 7s-3 5-3 8H5c0-3-4-5-4-8s2-7 7-7z" fill="#fdeeb0" stroke="#b89b45" /><path d="M5 16h7M5 18h7M6 20h5" stroke="#555" strokeWidth="1.500" />
            <circle cx="33" cy="10" r="6" fill="#fde9a0" stroke="#a98f40" /><path d="M33 0v2M33 18v2M23 10h3M40 10h3M26 2l2 2M38 16l2 2M40 2l-2 2M28 16l-2 2" stroke="#666" strokeWidth="1.500" />
            <path d="M51 1h12v11H51z M54 4h6v5h-6z" stroke="#a2a2a2" /><path d="M59 7h6v-2M53 13v4h5" stroke="#a2a2a2" /><circle cx="64" cy="16" r="4" stroke="#a2a2a2" strokeWidth="2" strokeDasharray="2 1" />
            <path d="M75 10h12v10H75z" fill="#f4dd8a" stroke="#333" strokeWidth="1.500" /><path d="M84 10V5c0-5 10-6 10 1v2" stroke="#444" strokeWidth="2" /><path d="M81 13v4" stroke="#222" strokeWidth="2" />
          </svg>
          <Swatch s="mr-[6px] h-[15px] w-[15px] ml-[3px]" />
        </Combo>
        <Tool name="layercur" /><Tool name="layerprev" /><Tool name="layerstate" />
      </Bar>
      <Bar>
        <div className="w-[6px] shrink-0 border-l-2 border-[#333]" />
        <Grip />
        <Combo label="Colour" value="ByLayer" width="w-[226px]" pad="pl-[8px]" low mono><Swatch s="mr-[5px] h-[15px] w-[15px]" /></Combo><Sep />
        <Combo label="Linetype" value="ByLayer" width="w-[240px]" pad="pl-[7px]" low mono><span className="mr-[6px] h-px w-[91px] shrink-0 bg-black" /></Combo><Sep />
        <Combo label="Lineweight" value="ByLayer" width="w-[188px]" pad="pl-[8px]" low mono><span className="mr-[7px] h-[2px] w-[52px] shrink-0 bg-black" /></Combo><Sep />
        <Combo label="Plot style" value="ByColor" width="w-[178px]" pad="pl-[14px]" low mono />
      </Bar>
    </div>
    <div className="flex">
      <Bar>
        <Grip />
        {tools("linear aligned arclen ordinate | radius jogged diameter angular | quickdim baseline cont space brk | tol center inspect jogline | dimedit dimtedit dimupd |")}
        <Combo label="Current dimension style" value="ISO-25" width="w-[180px]" />
        <Tool name="dimstyle" />
      </Bar>
    </div>
  </div>
);

const SideTool = ({ name }) => <button type="button" aria-label={name} className="flex h-[33px] w-[24px] shrink-0 items-center justify-center"><Icon name={name} /></button>;

const range = (n) => Array.from({ length: n }, (_, i) => i);
const STEP = 11.555;

const Canvas = () => (
  <div className="relative min-w-0 flex-1 overflow-hidden bg-[#212830]">
    <svg width="100%" height="100%" className="absolute inset-0" shapeRendering="crispEdges" fill="none" role="img" aria-label="Drawing area">
      {range(160).map((i) => { const x = Math.round(20 + (i - 1) * STEP) + 0.5; return (i - 1) % 5 ? <path key={i} d={`M${x} 0V2000`} stroke="#262e39" /> : null; })}
      {range(62).map((i) => { const y = Math.round(51 + (i - 4) * STEP) + 0.5; return (i - 4) % 5 ? <path key={i} d={`M0 ${y}H4000`} stroke="#262e39" /> : null; })}
      {range(32).map((i) => { const x = Math.round(20 + i * STEP * 5) + 0.5; return <path key={i} d={`M${x} 0V2000`} stroke="#323a4b" />; })}
      {range(12).map((i) => { const y = Math.round(51 + i * STEP * 5) + 0.5; return <path key={i} d={`M0 ${y}H4000`} stroke="#323a4b" />; })}
      <path d="M598.5 0V686" stroke="#2a7a2a" />
      <path d="M598 686.500H4000" stroke="#7a2a30" />
      <path d="M406.5 0V694M0 692.500H4000" stroke="#fff" />
      <path d="M19.500 599V674M20 674.500H95M13.500 667.500h13v13h-13z" stroke="#fff" />
      <g stroke="#fff" shapeRendering="auto"><path d="M21 576l9.500 9.500L40 576M30.500 585v10M99 654l19 19M118 654l-19 19" /></g>
      <g shapeRendering="auto">
        <path d="M437 665l7 7" stroke="#e4e4e4" strokeWidth="7" strokeLinecap="round" />
        <circle cx="428" cy="655" r="10" fill="#8c9199" stroke="#ddd" strokeWidth="3" />
        <circle cx="428" cy="655" r="8.500" stroke="#222" strokeWidth="1.500" />
        <path d="M436 664l7 7" stroke="#000" strokeWidth="5" strokeLinecap="round" />
      </g>
    </svg>
    <div className="relative pl-[3px] pt-[3px] font-['Noto_Sans_CJK_SC',sans-serif] text-[19px] leading-[26px] font-light text-white">[−][俯视][二维线框]</div>
  </div>
);

const Arrow = ({ d, label, className }) => (
  <button type="button" aria-label={label} className={`flex shrink-0 items-center justify-center ${className}`}><svg width="12" height="12" viewBox="0 0 12 12" fill="none"><path d={d} stroke="#555" strokeWidth="2.500" /></svg></button>
);

const Workspace = () => (
  <main className="flex min-h-0 flex-1 bg-[#5c5c5c]">
    <div className="w-[36px] shrink-0">
      <div className="mt-[1px] flex w-[32px] flex-col border-t-2 border-r-2 border-b-2 border-[#333]">
        <HGrip />
        {"line xline pline polygon rect arc circle cloud spline ellipse ellarc insert mkblock point hatch gradient region table bigA addsel".split(" ").map((n) => <SideTool key={n} name={n} />)}
      </div>
    </div>
    <div className="flex min-w-0 flex-1 flex-col">
      <div className="flex min-h-0 flex-1">
        <Canvas />
        <div className="flex w-[26px] shrink-0 flex-col border-l border-white bg-[#f0f0f0]">
          <Arrow label="Scroll up" d="M1 9l5-5 5 5" className="h-[27px]" />
          <div className="h-[26px] w-[24px] bg-[#cdcdcd]" />
          <div className="flex-1" />
          <Arrow label="Scroll down" d="M1 3l5 5 5-5" className="h-[26px]" />
        </div>
      </div>
      <div className="flex h-[26px] shrink-0 items-center bg-[#f0f0f0]">
        <Arrow label="Scroll left" d="M9 1L4 6l5 5" className="h-[26px] w-[26px]" />
        <div className="grow-[1128]" />
        <div className="h-[25px] w-[26px] bg-[#cdcdcd]" />
        <div className="grow-[603]" />
        <Arrow label="Scroll right" d="M3 1l5 5-5 5" className="mr-[26px] h-[26px] w-[26px]" />
      </div>
    </div>
    <div className="flex w-[39px] shrink-0 flex-col overflow-hidden pl-[4px]">
      <div className="mt-[1px] flex flex-col border-t-2 border-b-2 border-l-2 border-[#333]">
        <HGrip />
        <div className="flex flex-col pl-[5px]">{"erase copyobj mirror offset array move rotate scale stretch trim extend breakpt breakobj join chamfer fillet blend explode".split(" ").map((n) => <SideTool key={n} name={n} />)}</div>
      </div>
      <div className="mt-[1px] flex flex-col border-t-2 border-l-2 border-[#333]">
        <HGrip />
        <div className="flex flex-col pl-[5px]"><SideTool name="front" /><SideTool name="back" /><SideTool name="above" /></div>
      </div>
    </div>
  </main>
);

const CommandLine = () => (
  <div className="shrink-0 bg-[#5c5c5c] pt-[3px]">
    <div className="flex h-[58px] border-y-2 border-[#777] bg-white">
      <div className="flex w-[75px] shrink-0 items-center bg-linear-to-b from-[#8a8a8a] to-[#3c3c3c] pl-[5px]">
        <span className="h-[26px] border-l-2 border-dotted border-[#bbb]" />
        <button type="button" aria-label="Close command line" className="ml-[8px]"><svg width="16" height="14" viewBox="0 0 16 14"><path d="M2 1l12 12M14 1L2 13" stroke="#fff" strokeWidth="3" /></svg></button>
        <button type="button" aria-label="Customize command line" className="ml-[13px]"><svg width="24" height="24" viewBox="0 0 24 24"><path d="M8 1c4 0 7 4 5 8l10 10c0 3-2 4-4 4L9 12c-5 1-8-2-8-6l4 3 4-3z" fill="#e8ecf1" stroke="#3b4450" /></svg></button>
      </div>
      <label className="flex min-w-0 flex-1 items-center pl-[6px] font-['DejaVu_Sans_Mono',monospace] text-[18px] leading-6 text-black">
        <svg width="24" height="24" viewBox="0 0 24 24" fill="none" aria-hidden="true"><circle cx="9" cy="9" r="7" fill="#dfe2e5" stroke="#a9adb3" strokeWidth="2" /><path d="M9 4v5h4" stroke="#888" strokeWidth="1.500" /><path d="M16 16l5 7" stroke="#c7cbd0" strokeWidth="3" /><circle cx="16" cy="15" r="3" fill="#c9d0d8" stroke="#a9adb3" /></svg>
        <span className="mx-[5px]"><Tri color="#888" /></span>
        <b className="ml-[5px]">ZOOM</b>
        <span className="ml-[8px] pb-[2px] font-['Noto_Sans_CJK_SC',sans-serif] text-[20px] font-light">输入比例或高度</span>
        <span className="ml-[11px] whitespace-nowrap">&lt;3000.0000&gt;:</span>
        <input defaultValue="3000" className="ml-[15px] min-w-0 flex-1 bg-transparent pt-[2px] outline-none" />
      </label>
    </div>
  </div>
);

const LayoutTab = ({ label, active }) => (
  <button type="button" className={`grid ${active ? "z-10 -mr-[14px] text-white" : "-mr-[5px] text-[#b0b0b0]"}`}>
    <svg width="88" height="26" viewBox="0 0 88 26" className="col-start-1 row-start-1" aria-hidden="true"><path d="M0 0C12 1 12 25 22 25H68C78 25 76 1 88 0z" fill={active ? "url(#tabLow)" : "#5a5a5a"} stroke="#757575" /></svg>
    <span className={`col-start-1 row-start-1 text-center font-['Noto_Sans_CJK_SC',sans-serif] text-[18px] leading-[25px] ${active ? "font-bold" : "font-light"}`}>{label}</span>
  </button>
);

const Cell = ({ children, w }) => <div className={`flex h-full shrink-0 items-center border border-b-0 border-[#8a8a8a] bg-[#505050] pt-[3px] ${w}`}>{children}</div>;
const S = ({ w = "w-[36px]", label, children }) => (
  <button type="button" aria-label={label} className={`flex h-full shrink-0 items-center justify-center ${w}`}>
    <svg width="24" height="24" viewBox="0 0 24 24" fill="none" className="shrink-0 overflow-visible" stroke="#c9c9c9" strokeWidth="2">{children}</svg>
  </button>
);
const Drop = ({ w = "w-[22px]" }) => <button type="button" aria-label="More options" className={`flex h-full shrink-0 items-center justify-center ${w}`}><svg width="10" height="7" viewBox="0 0 10 7"><path d="M0 0h10L5 7z" fill="#fff" /></svg></button>;
const blue = "#1e90ff";
const Person = ({ c }) => <path d="M12 1l-2 9-2 4-6 8 5 1 5-6 5 6 5-1-6-8-2-4z" fill={c} />;

const Status = () => (
  <div className="ml-auto flex h-[36px] w-[862px] shrink-0 gap-[3px] border-t-[3px] border-[#5c5c5c] bg-[#3a3a3a]">
    <Cell w="w-[44px] justify-center"><button type="button" className="whitespace-nowrap font-['Noto_Sans_CJK_SC',sans-serif] text-[18px] leading-6 font-medium text-white">模型</button></Cell>
    <Cell w="w-[98px]">
      <S label="Grid"><path d="M4 2v21M9 2v21M14 2v21M19 2v21M1 6h22M1 11h22M1 16h22M1 21h22" stroke={blue} strokeWidth="1.700" /></S>
      <S label="Snap"><path d="M2 3h22M2 8h22M2 13h22M2 18h22M2 23h22" strokeDasharray="2 3" strokeWidth="1.500" /></S>
      <Drop />
    </Cell>
    <div className="flex h-full shrink-0">
      <Cell w="w-[38px]"><S label="Dynamic input"><path d="M5 2v9M0 6h10" stroke={blue} /><rect x="9" y="15" width="14" height="7" rx="1" fill={blue} stroke={blue} /></S></Cell>
      <Cell w="w-[153px]">
        <S label="Ortho"><path d="M3 3v18h18M3 14h8v7" strokeWidth="1.700" /></S>
        <S label="Polar tracking"><circle cx="11" cy="12" r="9.500" strokeWidth="1.800" /><path d="M11 12h13M11 12l8-8" strokeWidth="1.800" /></S>
        <Drop /><S label="Isometric drafting" w="w-[36px]"><path d="M2 1l20 23M13 0v24M0 2l9 0" strokeWidth="1.500" /></S><Drop />
      </Cell>
      <Cell w="w-[98px]">
        <S label="Object snap tracking"><path d="M22 3L2 21h22" stroke={blue} /><circle cx="11" cy="13" r="2" fill={blue} stroke={blue} /></S>
        <S label="Object snap"><path d="M4 4h19v18H4z" stroke={blue} /><path d="M1 1h7v7H1z" fill="#12d312" stroke="#063d06" /></S>
        <Drop />
      </Cell>
    </div>
    <Cell w="w-[159px]">
      <S label="Annotation visibility"><Person c={blue} /><circle cx="17" cy="5" r="4" stroke={blue} fill="#505050" /></S>
      <S label="Auto scale"><Person c="#c9c9c9" /><path d="M20 1l-4 5h5l-4 6" /></S>
      <S label="Annotation scale"><Person c="#c9c9c9" /></S>
      <button type="button" className="ml-[3px] w-[24px] font-['Liberation_Sans',sans-serif] text-[16px] leading-6 text-white">1:1</button><Drop w="w-[16px]" />
    </Cell>
    <div className="flex h-full shrink-0">
      <Cell w="w-[60px]"><S label="Workspace"><circle cx="12" cy="12" r="5" strokeWidth="5" /><path d="M12 3v3M12 18v3M3 12h3M18 12h3M5 5l3 3M16 16l3 3M19 5l-3 3M8 16l-3 3" strokeWidth="3" /></S><Drop /></Cell>
      <Cell w="w-[38px]"><S label="Annotation monitor"><path d="M12 1v22M1 12h22" strokeWidth="2.500" /></S></Cell>
    </div>
    <Cell w="w-[40px]"><S label="Isolate objects"><path d="M2 1h8v10H2zM16 14l-5 9h9z" strokeWidth="1.600" /><circle cx="18" cy="9" r="5" strokeWidth="1.600" /></S></Cell>
    <Cell w="w-[39px]"><S label="Hardware acceleration"><circle cx="12" cy="12" r="11.500" fill="#1262b8" stroke={blue} /><path d="M11 15l2 2 5-6" stroke="#5cb6ff" /></S></Cell>
    <Cell w="w-[5px]" />
    <Cell w="w-[70px]">
      <S label="Clean screen"><path d="M1 4h22v17H1z" strokeWidth="1.500" /><path d="M13 11l5-4M10 14l-5 4" strokeWidth="2" /><path d="M14 6h6v6zM4 13v6h6z" fill="#c9c9c9" stroke="none" /></S>
      <S label="Customization"><path d="M1 4h22M1 12h22M1 20h22" strokeWidth="2.500" /></S>
    </Cell>
  </div>
);

const Watermark = () => (
  <svg width="350" height="166" viewBox="0 0 350 166" className="pointer-events-none absolute right-[96px] bottom-[36px] overflow-visible opacity-75 drop-shadow-[0_0_1px_#777]" role="img" aria-label="Baidu 经验">
    <g fill="#fff">
      <ellipse cx="160" cy="21" rx="12" ry="17" />
      <ellipse cx="190" cy="23" rx="13" ry="17" transform="rotate(10 190 23)" />
      <ellipse cx="136" cy="45" rx="13" ry="17" transform="rotate(-6 136 45)" />
      <ellipse cx="209" cy="53" rx="13" ry="16" />
      <path d="M172 47c14 0 16 12 26 21 9 9 18 14 18 25 0 14-11 19-23 18-8-1-13-2-20-2s-12 1-20 2c-13 1-23-6-23-19 0-12 10-16 18-24 9-9 11-21 24-21z" />
      <text x="2" y="109" fontFamily="Liberation Sans" fontWeight="bold" fontSize="78" stroke="#fff" strokeWidth="2">Bai</text>
      <text x="226" y="106" fontFamily="Noto Sans CJK SC" fontWeight="900" fontSize="58">经验</text>
      <text x="6" y="154" fontFamily="Noto Sans" fontSize="39">jingyan.baidu.com</text>
    </g>
    <text x="173" y="102" textAnchor="middle" fontFamily="Liberation Sans" fontWeight="bold" fontSize="50" fill="#fff" stroke="#b4b4b4" strokeWidth="2">du</text>
  </svg>
);

export default function App() {
  return (
    <div className="relative flex h-screen w-full flex-col overflow-hidden border-[5px] border-[#999a93] bg-[#383838]">
      <Defs />
      <Header />
      <DocTabs />
      <Toolbars />
      <Workspace />
      <CommandLine />
      <footer className="flex h-[65px] shrink-0 flex-col justify-between bg-[#383838]">
        <div className="flex h-[29px] pl-[2px]">
          <LayoutTab label="模型" active /><LayoutTab label="布局1" /><LayoutTab label="布局2" />
          <button type="button" aria-label="New layout" className="ml-[9px] h-[24px]"><svg width="36" height="24" viewBox="0 0 36 24"><path d="M35 0H16C6 2 4 12 1 23h20c9 0 13-10 14-23z" fill="#4c4c4c" stroke="#666" /><path d="M12 12h12M18 6v12" stroke="#b5b5b5" strokeWidth="3" /></svg></button>
        </div>
        <Status />
      </footer>
      <Watermark />
    </div>
  );
}
